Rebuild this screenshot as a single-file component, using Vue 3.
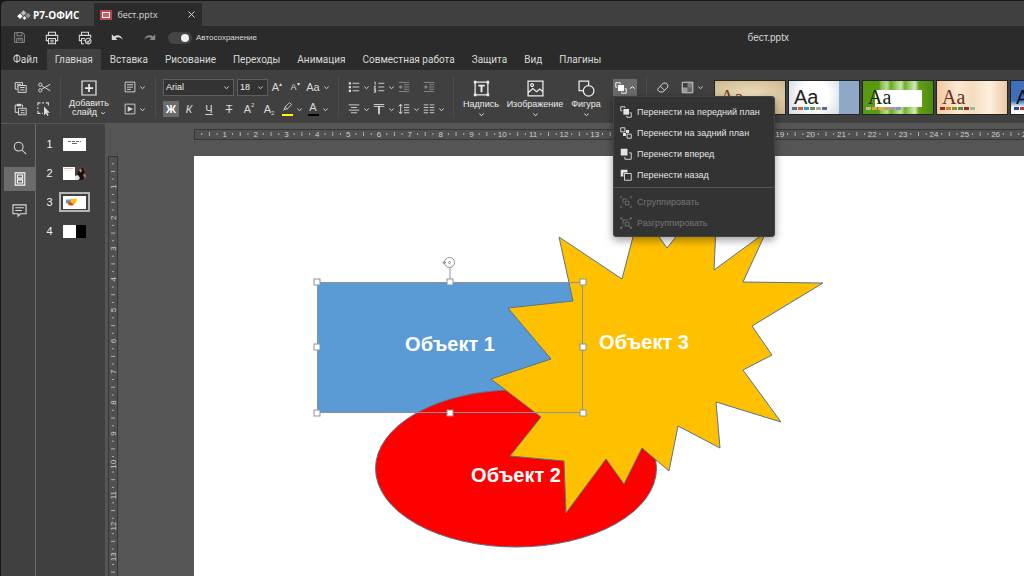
<script setup>
import { h, ref } from 'vue'

const S = (d) => ({ d })
const F = (d, opacity) => ({ d, fill: true, opacity })

const icons = {
  save: [S('M2 2h10l2 2v10H2zM5 2v4h6V2M4.500 14V9h7v5M6 11h4')],
  print: [S('M4 5V1.500h8V5M4 11H1.500V5h13v6H12M4 8.500h8v6H4zM6 10.500h4M6 12.500h4')],
  printPreview: [S('M4 5V1.500h8V5M4 11H1.500V5h13v3M7 14.500H4v-6h4M6 10.500h2M8.500 11.500a3.200 3.200 0 1 0 6.400 0a3.200 3.200 0 1 0 -6.400 0M10 11.500l1.500 1.500 2-3')],
  undo: [F('M1 4v7h7L5.500 8.700C8 7 12 7 14.500 11C13.500 5.500 8 3.500 3.700 6.700z')],
  redo: [F('M15 4v7H8l2.500-2.300C8 7 4 7 1.500 11C2.500 5.500 8 3.500 12.300 6.700z')],
  copy: [S('M4.500 10H1.500V2h9v3M3.500 4.500h5M3.500 7h1M5 5.500h10v8.500H5zM7.500 8h5.500M7.500 11h5.500')],
  cut: [S('M4.500 5.800L15 12M4.500 10.200L15 4M.8 4.500a2 2 0 1 0 4 0a2 2 0 1 0 -4 0M.8 11.500a2 2 0 1 0 4 0a2 2 0 1 0 -4 0')],
  paste: [S('M5 11.500H1.500v-9h9v3M5.500 6.500H15v8H5.500zM8 9h5M8 12h5'), F('M3.500 1h5v3h-5z')],
  select: [S('M1 4V1h3M6 1h2M10 1h3v3M1 6v2M1 10v3h3M6 13h1'), F('M8 5v10l2.300-2 1.500 3 1.500-.8-1.500-2.900h3z')],
  addSlide: [S('M1 1h14v14H1z'), F('M7.200 4h1.700v3.200H12v1.700H8.900V12H7.200V8.900H4V7.200h3.200z')],
  layout: [S('M1.500 1.500h13v13h-13zM4 5h8M4 8.200h8M4 11.200h5')],
  play: [S('M1.500 1.500h13v13h-13z'), F('M5 4.500v7L12 8z')],
  bullets: [S('M6 3h9M6 8h9M6 13h9'), F('M1 1.500h3v3H1zM1 6.500h3v3H1zM1 11.500h3v3H1z')],
  numbers: [S('M7 3h8M7 8h8M7 13h8M1.500 1.500H3V5M1 7h2.500L1.500 9.700H4M1 11.500h2.500v3.500H1M1.500 13h2')],
  outdent: [S('M1 2h14M8 5h7M8 8h7M8 11h7M1 14h14M1.500 8h5'), F('M1 8l3.500-3v6z')],
  indent: [S('M1 2h14M8 5h7M8 8h7M8 11h7M1 14h14M1 8h4'), F('M6.500 8L3 5v6z')],
  align: [S('M1 2.500h14M4 6h8M1 9.500h14M4 13h8')],
  valign: [S('M1 2h14M1 4.500h14'), F('M6.800 4h2.400v11H6.800z')],
  spacing: [S('M3.500 2v12M1 4.500L3.500 1.500 6 4.500M1 11.500l2.500 3 2.500-3M8 2.500h7M8 6h7M8 9.500h7M8 13h7')],
  columns: [S('M1 2.500h6M9 2.500h6M1 6h6M9 6h6M1 9.500h6M9 9.500h6M1 13h6M9 13h6')],
  textbox: [S('M2 2h12v12H2z'), F('M.8.800h2.400v2.400H.8zM12.800.800h2.400v2.400h-2.400zM.8 12.800h2.400v2.400H.8zM12.800 12.800h2.400v2.400h-2.400zM5 4.500h6v1.700H8.900v5.300H7.100V6.200H5z')],
  image: [S('M1 1h14v14H1zM1 12l4.500-4L9 11l3-2.500 3 2.500M3.500 4.800a1.300 1.300 0 1 0 2.600 0a1.300 1.300 0 1 0 -2.600 0')],
  shape: [S('M5 10H1V1h9v4M5 10.200a5 5 0 1 0 10 0a5 5 0 1 0 -10 0')],
  arrange: [F('M4 4h8v8H4z'), S('M3 7H1V1h6v2M13 9h2v6H9v-2')],
  front: [F('M4.500 4h7.500v7.500H4.500z'), S('M3 6.500H1V1h5.500v1.500M13 9h2v6H9v-2')],
  back: [S('M1 1h5.500v5.500H1zM9.500 9.500H15V15H9.500z'), F('M8 4h4v4H8zM4 8h4v4H4z')],
  forward: [F('M1 1h9v9H1z'), S('M12 6.500h3V15H6.500v-3')],
  backward: [F('M1 1h9v3.500H4.500V10H1z'), S('M6 6h9v9H6z')],
  group: [S('M1 3V1h2M13 1h2v2M1 13v2h2M15 13v2h-2M4 10V4h6M7 7h5v5H7z')],
  ungroup: [S('M1 3V1h2M13 1h2v2M1 13v2h2M15 13v2h-2M4 10V4h6M7 7h5v5H7zM1 1l3 3M15 1l-3 3M1 15l3-3M15 15l-3-3')],
  eraser: [S('M2 10l7-7.500h3.500L14.500 5v2.500L8.500 13.500H4.500L2 11zM5.500 6.500l5 5')],
  scheme: [S('M1.500 1.500h13v13h-13z'), F('M8 2h6v6H8z', 0.4), F('M2 8h6v6H2z', 0.6), F('M8 8h6v6H8z', 0.25)],
  search: [S('M1.500 6.500a5 5 0 1 0 10 0a5 5 0 1 0 -10 0M10 10l5 5')],
  slides: [S('M2.500 1h11v14h-11zM5 3.500h6v3.500H5zM5 9h6v3.500H5z')],
  comment: [S('M1 2h14v9.500H9L6.500 14v-2.500H1zM3.500 5h9M3.500 8h7')],
  marker: [S('M3 11l1.500-4L11 1l3 2.500L8 10zM4.500 7L8 10M2 12.500L3.500 11')],
  chevron: [S('M3 6l5 4.500 5-4.500')],
  chevronUp: [S('M3 10.500l5-4.500 5 4.500')]
}

const Icon = (props) =>
  h(
    'svg',
    { class: 'icon', viewBox: '0 0 16 16', width: props.size, height: props.size, 'aria-hidden': 'true' },
    icons[props.name].map((p) =>
      h('path', {
        d: p.d,
        fill: p.fill ? 'currentColor' : 'none',
        'fill-opacity': p.opacity,
        stroke: p.fill ? 'none' : 'currentColor',
        'stroke-width': props.size < 10 ? 2.2 : 1.2
      })
    )
  )
Icon.props = { name: String, size: { type: Number, default: 13 } }

const autosave = ref(true)
const font = ref('Arial')
const fontSize = ref('18')

const menuTabs = ['Файл', 'Главная', 'Вставка', 'Рисование', 'Переходы', 'Анимация', 'Совместная работа', 'Защита', 'Вид', 'Плагины']

const arrangeTop = [
  { icon: 'front', label: 'Перенести на передний план' },
  { icon: 'back', label: 'Перенести на задний план' },
  { icon: 'forward', label: 'Перенести вперед' },
  { icon: 'backward', label: 'Перенести назад' }
]
const arrangeBottom = [
  { icon: 'group', label: 'Сгруппировать' },
  { icon: 'ungroup', label: 'Разгруппировать' }
]

const inserts = [
  { icon: 'textbox', label: 'Надпись', cls: 'ins-a' },
  { icon: 'image', label: 'Изображение', cls: 'ins-b' },
  { icon: 'shape', label: 'Фигура', cls: 'ins-c' }
]

const themes = [
  { cls: 'sepia', colors: ['#9c5a2c', '#c98a3c', '#7d7d3a', '#b36b6b', '#8c6b4a', '#a0a060'] },
  { cls: 'winter', colors: ['#5f6a72', '#e0592b', '#2f9fc4', '#7c8a3c', '#a8a8a8', '#5b6b8c'] },
  { cls: 'green', colors: ['#a9c79a', '#e0a23a', '#d8b04a', '#c2a25a', '#9a9ac0', '#8a90c8'] },
  { cls: 'peach', colors: ['#8c2f1e', '#c9862c', '#8c8c3a', '#5e8a4a', '#9c2a2a', '#8cc49a'] },
  { cls: 'sky', colors: ['#2c4c8c', '#c0392b', '#3c6cb4', '#7aa23c', '#a0a0a0', '#606060'] }
]

// Ruler scale: pixels per centimetre; the slide is 34 by 19 cm.
const UNIT = 30.83
const range = (n) => Array.from({ length: n }, (_, i) => i)
const hTicks = range(34)
const vTicks = range(19)
const handles = [
  [123, 126], [256, 126], [389, 126],
  [123, 191], [389, 191],
  [123, 257], [256, 257], [389, 257]
]
const star =
  '365,81 428,123 446,54 473,92 524,28 520,114 572,76 549,126 629,127 558,170 578,199 549,214 587,266 522,246 526,292 484,270 475,315 448,292 430,328 412,303 372,357 370,305 316,300 347,261 297,223 357,203 314,152 379,145'
</script>

<template>
  <div class="window">
    <header class="titlebar">
      <div class="brand">
        <svg class="brand-mark" width="14" height="12" viewBox="0 0 14 12" aria-hidden="true">
          <path d="M3 4.500L5.800 7.300 3 10.100 .2 7.300z" fill="#fff" />
          <path d="M6.500 1.200L9.300 4 6.500 6.800 3.700 4z" fill="#bdbdbd" />
          <path d="M7.500 7L9.500 9 7.500 11 5.500 9z" fill="#f0f0f0" />
          <path d="M11 3.800L13.800 6.600 11 9.400 8.200 6.600z" fill="#8d8d8d" />
        </svg>
        <span>Р7-ОФИС</span>
      </div>
      <div class="doc-tab">
        <span class="doc-icon"></span>
        <span class="doc-name">бест.pptx</span>
        <button class="bare close" aria-label="Закрыть">
          <svg width="7" height="7" viewBox="0 0 7 7" aria-hidden="true"><path d="M.5.500l6 6M6.500.500l-6 6" stroke="currentColor" /></svg>
        </button>
      </div>
    </header>

    <div class="quickbar">
      <div class="quick-tools">
        <button class="bare dim" aria-label="Сохранить"><Icon name="save" /></button>
        <button class="bare" aria-label="Печать"><Icon name="print" :size="14" /></button>
        <button class="bare" aria-label="Быстрая печать"><Icon name="printPreview" :size="14" /></button>
        <button class="bare" aria-label="Отменить"><Icon name="undo" /></button>
        <button class="bare dim" aria-label="Повторить"><Icon name="redo" /></button>
        <label class="autosave">
          <input v-model="autosave" type="checkbox" class="switch" />
          <span>Автосохранение</span>
        </label>
      </div>
      <div class="doc-title">бест.pptx</div>
    </div>

    <nav class="menubar">
      <button v-for="t in menuTabs" :key="t" class="menu-tab" :class="{ active: t === 'Главная' }">{{ t }}</button>
    </nav>

    <div class="toolbar">
      <div class="group clip">
        <button class="bare" aria-label="Копировать"><Icon name="copy" /></button>
        <button class="bare" aria-label="Вырезать"><Icon name="cut" /></button>
        <button class="bare" aria-label="Вставить"><Icon name="paste" /></button>
        <button class="bare" aria-label="Выделить"><Icon name="select" :size="14" /></button>
      </div>

      <div class="group slide-group">
        <button class="big">
          <Icon name="addSlide" :size="16" />
          <span>Добавить</span>
          <span class="with-chevron">слайд <Icon name="chevron" :size="6" /></span>
        </button>
        <div class="stack">
          <button class="bare split" aria-label="Макет"><Icon name="layout" :size="12" /><Icon name="chevron" :size="7" /></button>
          <button class="bare split" aria-label="Показ"><Icon name="play" :size="12" /><Icon name="chevron" :size="7" /></button>
        </div>
      </div>

      <div class="group font-group">
        <div class="line">
          <label class="combo font-name">
            <select v-model="font" aria-label="Шрифт"><option>Arial</option></select>
            <Icon name="chevron" :size="7" />
          </label>
          <label class="combo font-size">
            <select v-model="fontSize" aria-label="Размер шрифта"><option>18</option></select>
            <Icon name="chevron" :size="7" />
          </label>
          <button class="bare glyph cell-18">A<sup>▴</sup></button>
          <button class="bare glyph small cell-18">A<sup>▾</sup></button>
          <button class="bare glyph split cell-28">Aa<Icon name="chevron" :size="7" /></button>
        </div>
        <div class="line format">
          <button class="bare glyph pressed"><b>Ж</b></button>
          <button class="bare glyph"><i>К</i></button>
          <button class="bare glyph"><u>Ч</u></button>
          <button class="bare glyph"><s>Т</s></button>
          <button class="bare glyph">A<sup>2</sup></button>
          <button class="bare glyph">A<sub>2</sub></button>
          <button class="bare glyph split" aria-label="Цвет выделения">
            <span class="swatch-icon yellow"><Icon name="marker" :size="11" /></span><Icon name="chevron" :size="7" />
          </button>
          <button class="bare glyph split">
            <span class="swatch-icon black">A</span><Icon name="chevron" :size="7" />
          </button>
        </div>
      </div>

      <div class="group para-group">
        <button class="bare split" aria-label="Маркеры"><Icon name="bullets" :size="12" /><Icon name="chevron" :size="7" /></button>
        <button class="bare split" aria-label="Нумерация"><Icon name="numbers" :size="12" /><Icon name="chevron" :size="7" /></button>
        <button class="bare split dim" aria-label="Уменьшить отступ"><Icon name="outdent" :size="12" /></button>
        <button class="bare split dim" aria-label="Увеличить отступ"><Icon name="indent" :size="12" /></button>
        <button class="bare split" aria-label="Выравнивание"><Icon name="align" :size="12" /><Icon name="chevron" :size="7" /></button>
        <button class="bare split" aria-label="По вертикали"><Icon name="valign" :size="12" /><Icon name="chevron" :size="7" /></button>
        <button class="bare split" aria-label="Интервал"><Icon name="spacing" :size="12" /><Icon name="chevron" :size="7" /></button>
        <button class="bare split" aria-label="Колонки"><Icon name="columns" :size="12" /><Icon name="chevron" :size="7" /></button>
      </div>

      <div class="group insert-group">
        <button v-for="i in inserts" :key="i.label" class="big" :class="i.cls">
          <Icon :name="i.icon" :size="17" />
          <span>{{ i.label }}</span>
          <Icon name="chevron" :size="7" />
        </button>
        <div class="arrange">
          <button class="bare arrange-btn" aria-label="Порядок" aria-expanded="true">
            <Icon name="arrange" :size="12" /><Icon name="chevronUp" :size="7" />
          </button>
          <div class="menu" role="menu">
            <button v-for="m in arrangeTop" :key="m.label" class="menu-item" role="menuitem">
              <Icon :name="m.icon" :size="12" /><span>{{ m.label }}</span>
            </button>
            <hr />
            <button v-for="m in arrangeBottom" :key="m.label" class="menu-item" role="menuitem" disabled>
              <Icon :name="m.icon" :size="12" /><span>{{ m.label }}</span>
            </button>
          </div>
        </div>
      </div>

      <div class="group style-group">
        <button class="bare" aria-label="Очистить стиль"><Icon name="eraser" :size="13" /></button>
        <button class="bare split" aria-label="Цветовая схема"><Icon name="scheme" :size="13" /><Icon name="chevron" :size="7" /></button>
      </div>

      <div class="gallery">
        <button v-for="t in themes" :key="t.cls" class="theme" :class="t.cls">
          <span class="aa">Aa</span>
          <span class="palette">
            <i v-for="(c, n) in t.colors" :key="n" :style="{ background: c }"></i>
          </span>
        </button>
      </div>
    </div>

    <main class="body">
      <aside class="rail">
        <button class="rail-btn" aria-label="Поиск"><Icon name="search" :size="14" /></button>
        <button class="rail-btn on" aria-label="Слайды"><Icon name="slides" :size="14" /></button>
        <button class="rail-btn" aria-label="Комментарии"><Icon name="comment" :size="15" /></button>
      </aside>

      <ol class="slides">
        <li v-for="n in 4" :key="n" :class="{ current: n === 3 }">
          <span class="num">{{ n }}</span>
          <button class="thumb" :aria-label="'Слайд ' + n">
            <svg viewBox="0 0 23 13" width="23" height="13" aria-hidden="true">
              <rect width="23" height="13" fill="#fff" />
              <g v-if="n === 1" stroke="#666" stroke-width="1">
                <path d="M5 3.500h13" stroke-dasharray="3 1" />
                <path d="M9 5.500h5" />
              </g>
              <g v-else-if="n === 2">
                <path d="M1 1.500h9" stroke="#e3b5b5" stroke-width="1" />
                <path d="M2 3.500h8" stroke="#eee" stroke-width="1" />
                <rect x="12" width="11" height="13" fill="#4d4040" />
                <path d="M14 8l2-6 4-1 2 5-2 7h-3z" fill="#14110f" />
                <path d="M16 2.500l2-1 1 3-2 1z" fill="#c98a78" />
                <path d="M12 9l3-1 2 3-2 2h-3z" fill="#e8e0dc" />
                <path d="M21 6l2 2v3l-3-2z" fill="#b06a50" />
              </g>
              <g v-else-if="n === 3">
                <rect x="3" y="3.500" width="5" height="4" fill="#5b9bd5" />
                <ellipse cx="8" cy="7.500" rx="3" ry="2" fill="#e8442a" />
                <path d="M8 2.500l2 .5 4-.5-1 4.500L10 8 7.500 6z" fill="#ffc000" />
              </g>
              <rect v-else x="13" width="10" height="13" fill="#000" />
            </svg>
          </button>
        </li>
      </ol>

      <section class="workspace">
        <svg class="vruler" aria-hidden="true">
          <rect class="ruler-frame" x="0.500" y="0.500" width="9" height="100%" />
          <g v-for="i in vTicks" :key="i">
            <path
              class="tick"
              :d="`M4 ${(i + 0.25) * UNIT}h2M3 ${(i + 0.5) * UNIT}h4M4 ${(i + 0.75) * UNIT}h2`"
            />
            <text v-if="i" class="ruler-num" :transform="`translate(8 ${i * UNIT}) rotate(-90)`">{{ i }}</text>
          </g>
        </svg>
        <svg class="hruler" aria-hidden="true">
          <rect class="ruler-frame" x="0.500" y="0.500" width="100%" height="10" />
          <g v-for="i in hTicks" :key="i">
            <path
              class="tick"
              :d="`M${(i + 0.25) * UNIT} 4v2M${(i + 0.5) * UNIT} 3v4M${(i + 0.75) * UNIT} 4v2`"
            />
            <text v-if="i" class="ruler-num" :x="i * UNIT" y="8">{{ i }}</text>
          </g>
        </svg>
        <svg class="slide">
          <rect x="123" y="126" width="266" height="131" fill="#5b9bd5" />
          <text class="caption" x="256" y="195">Объект 1</text>
          <ellipse cx="322" cy="312.500" rx="140.500" ry="78.500" fill="#ff0000" class="outline" />
          <text class="caption" x="322" y="326">Объект 2</text>
          <polygon :points="star" fill="#ffc000" class="outline" />
          <text class="caption" x="450" y="193">Объект 3</text>
          <g class="selection">
            <path d="M256 111v15" />
            <rect x="123.500" y="126.500" width="265" height="130" fill="none" />
            <circle cx="255.500" cy="106.500" r="5" fill="#fff" />
            <circle cx="255.500" cy="106.500" r="1" fill="none" />
            <path d="M249 106.500h3M249 106.500l1.500-1.500v3z" />
            <rect v-for="([x, y], n) in handles" :key="n" :x="x - 3" :y="y - 3" width="6" height="6" fill="#fff" />
          </g>
        </svg>
      </section>
    </main>
  </div>
</template>

<style>
body {
  background: #161616;
}
</style>

<style scoped>
.window {
  box-sizing: border-box;
  height: 100vh;
  padding: 1px 0 0 1px;
  display: flex;
  flex-direction: column;
  overflow: hidden;
  color: #d9d9d9;
  font: 9px/10px "Liberation Sans", Arial, sans-serif;
}
button,
select {
  font: inherit;
  color: inherit;
  margin: 0;
  padding: 0;
  border: 0;
  background: none;
}
.icon {
  display: block;
  flex: none;
}
.bare {
  display: flex;
  align-items: center;
  justify-content: center;
}
.dim {
  color: #8a8a8a;
}
.titlebar {
  flex: none;
  box-sizing: border-box;
  display: flex;
  height: 25px;
  padding-top: 2px;
  background: #404040;
  border-top-left-radius: 5px;
}
.brand {
  display: flex;
  align-items: center;
  gap: 2px;
  padding: 0 15px 0 16px;
  font: bold 10px/14px "Open Sans", sans-serif;
  color: #fff;
}
.doc-tab {
  display: flex;
  align-items: center;
  width: 95px;
  padding: 0 7px 0 6px;
  background: #2b2b2b;
  font: 9px/14px "Open Sans", sans-serif;
}
.doc-icon {
  width: 6px;
  height: 4px;
  border: 1px solid #fff;
  outline: 2px solid #b9484c;
  margin: 0 7px 0 2px;
  background: #c96064;
}
.doc-name {
  flex: 1;
}
.quickbar {
  flex: none;
  display: grid;
  grid-template-columns: 1fr 1fr;
  align-items: center;
  height: 23px;
  background: #2b2b2b;
}
.quick-tools {
  display: flex;
  align-items: center;
  gap: 19px;
  padding-left: 12px;
}
.autosave {
  display: flex;
  align-items: center;
  gap: 4px;
  margin-left: -7px;
  font-size: 8px;
}
.switch {
  appearance: none;
  display: grid;
  align-items: center;
  justify-content: end;
  box-sizing: border-box;
  width: 24px;
  height: 12px;
  margin: 0;
  padding: 0 3px;
  border-radius: 6px;
  background: #454545;
}
.switch::after {
  content: "";
  width: 8px;
  height: 8px;
  border-radius: 50%;
  background: #f2f2f2;
}
.doc-title {
  text-align: center;
  font: 10px/12px "Liberation Sans", Arial, sans-serif;
}
.menubar {
  flex: none;
  display: flex;
  gap: 1px;
  height: 21px;
  padding-left: 4px;
  background: #2b2b2b;
}
.menu-tab {
  padding: 0 8px;
  font: 10px/12px Roboto, "Liberation Sans", sans-serif;
  white-space: nowrap;
}
.menu-tab.active {
  background: #404040;
}
.toolbar {
  flex: none;
  box-sizing: border-box;
  display: flex;
  height: 54px;
  padding: 6px 0 5px;
  background: #404040;
  border-bottom: 1px solid #585858;
}
.group {
  flex: none;
  box-sizing: border-box;
  border-right: 1px solid #4d4d4d;
}
.clip {
  display: grid;
  grid-template-columns: 24px 24px;
  grid-template-rows: 22px 22px;
  padding: 0 4px 0 7px;
}
.slide-group {
  display: flex;
  padding: 0 9px 0 7px;
}
.big {
  display: flex;
  flex-direction: column;
  align-items: center;
  white-space: nowrap;
  color: #ececec;
  padding-top: 4px;
}
.big > span {
  line-height: 9px;
}
.big > .icon:first-child {
  margin-bottom: 3px;
}
.slide-group .big {
  width: 42px;
}
.with-chevron {
  display: flex;
  align-items: center;
  gap: 3px;
}
.stack {
  display: grid;
  grid-template-rows: 22px 22px;
  padding-left: 14px;
}
.split {
  gap: 3px;
  justify-content: flex-start;
}
.font-group {
  display: grid;
  grid-template-rows: 22px 22px;
  padding: 0 6px 0 7px;
}
.line {
  display: flex;
  align-items: center;
}
.combo {
  display: flex;
  align-items: center;
  box-sizing: border-box;
  height: 17px;
  padding: 0 3px 0 2px;
  border: 1px solid #5e5e5e;
  background: #333;
}
.combo select {
  flex: 1;
  min-width: 0;
  appearance: none;
  color: #f2f2f2;
}
.font-name {
  width: 71px;
  margin-right: 3px;
}
.font-size {
  width: 31px;
}
.glyph {
  font: 11px/14px "Liberation Sans", Arial, sans-serif;
}
.glyph sup,
.glyph sub {
  font-size: 6px;
  line-height: 8px;
}
.glyph sup {
  align-self: flex-start;
}
.glyph sub {
  align-self: flex-end;
}
.small {
  font-size: 9px;
}
.cell-18 {
  width: 18px;
}
.cell-28 {
  width: 28px;
  justify-content: center;
}
.format .glyph {
  width: 20px;
  height: 16px;
}
.format .pressed {
  width: 16px;
  background: #6b6b6b;
  color: #fff;
}
.format .split {
  width: 26px;
  justify-content: center;
}
.swatch-icon {
  display: flex;
  justify-content: center;
  width: 11px;
  height: 12px;
  line-height: 11px;
  border-bottom: 2px solid;
}
.yellow {
  border-color: #ffff00;
}
.black {
  border-color: #000;
}
.para-group {
  display: grid;
  grid-template-columns: repeat(4, 25px);
  grid-template-rows: 22px 22px;
  padding: 0 5px 0 9px;
}
.insert-group {
  display: flex;
  padding: 0 9px 0 6px;
}
.insert-group .big > span {
  margin-bottom: 2px;
}
.ins-a {
  width: 42px;
}
.ins-b {
  width: 66px;
}
.ins-c {
  width: 36px;
}
.arrange {
  position: relative;
  padding: 3px 0 0 9px;
}
.arrange-btn {
  width: 24px;
  height: 17px;
  gap: 2px;
  background: #6b6b6b;
  color: #fff;
}
.menu {
  position: absolute;
  z-index: 2;
  top: 20px;
  left: 9px;
  box-sizing: border-box;
  width: 162px;
  padding: 4px 0 3px;
  border: 1px solid #444;
  border-radius: 3px;
  background: #333;
  box-shadow: 0 3px 8px rgba(0, 0, 0, 0.4);
}
.menu-item {
  display: flex;
  align-items: center;
  gap: 5px;
  width: 100%;
  height: 21px;
  padding: 0 6px;
  white-space: nowrap;
  color: #e4e4e4;
}
.menu-item:disabled {
  color: #757575;
}
.menu hr {
  height: 1px;
  margin: 2px 0 3px;
  border: 0;
  background: #555;
}
.style-group {
  display: flex;
  align-items: flex-start;
  height: 22px;
  gap: 12px;
  padding: 5px 9px 0;
  border-right: 0;
}
.gallery {
  flex: 1;
  min-width: 0;
  display: flex;
  gap: 2px;
  padding: 4px 0 0 1px;
  overflow: hidden;
}
.theme {
  flex: none;
  box-sizing: border-box;
  display: flex;
  flex-direction: column;
  align-items: flex-start;
  width: 72px;
  height: 35px;
  padding: 6px 3px 0;
  border: 1px solid #242424;
}
.aa {
  font: 20px/20px "Liberation Sans", Arial, sans-serif;
  padding-left: 2px;
}
.palette {
  display: flex;
  gap: 1px;
}
.palette i {
  width: 5px;
  height: 3px;
}
.sepia {
  background: radial-gradient(#f3e6c8, #cdb68c);
  color: #7a3a14;
}
.winter {
  background: linear-gradient(90deg, transparent 50px, #8fa8c8 50px), radial-gradient(circle at 26px 14px, #fff 14px, #d3dce6 30px);
  color: #222;
}
.green {
  background: linear-gradient(#fff, #fff) 12px 9px / 47px 17px no-repeat,
    linear-gradient(90deg, #5a9a10 0 16px, #8cc048 18px, #b9d99a 24px, #6aa820 28px, #a8d078 34px, #c9e2ae 38px, #6fae28 42px, #9ccc60 46px, #d5e8c0 52px, #62a018 56px, #4d8c0a);
  color: #14240a;
}
.green .aa,
.sepia .aa,
.peach .aa {
  font-family: "Liberation Serif", serif;
}
.peach {
  background: linear-gradient(90deg, #f0c8a0, #fbe9d2 30%, #f5dcbc 50%, #fdf0de 75%, #ecc9a4);
  color: #6b2a1c;
}
.sky {
  background: linear-gradient(#3f6fb8 60%, #fff 80%);
  color: #111;
}
.body {
  flex: 1;
  min-height: 0;
  display: flex;
  background: #404040;
}
.rail {
  flex: none;
  display: flex;
  flex-direction: column;
  gap: 7px;
  padding: 12px 0 0 3px;
  border-right: 1px solid #6a6a6a;
}
.rail-btn {
  display: flex;
  align-items: center;
  justify-content: center;
  width: 31px;
  height: 24px;
}
.rail-btn.on {
  background: #6b6b6b;
  color: #fff;
}
.slides {
  flex: none;
  width: 69px;
  margin: 0;
  padding: 10px 0 0;
  list-style: none;
}
.slides li {
  display: flex;
  align-items: center;
  height: 20px;
  margin-bottom: 9px;
}
.num {
  width: 23px;
  padding-left: 4px;
  box-sizing: border-box;
  text-align: center;
  font-size: 11px;
  line-height: 12px;
  color: #f2f2f2;
}
.thumb {
  display: flex;
  align-items: center;
  justify-content: center;
  box-sizing: border-box;
  width: 31px;
  height: 20px;
}
.current .thumb {
  border: 2px solid #b5b5b5;
}
.workspace {
  flex: 1;
  min-width: 0;
  display: grid;
  grid-template-columns: 89px 1fr;
  grid-template-rows: 32px 1fr;
  background: #555;
}
.hruler {
  grid-area: 1 / 2;
  width: 100%;
  height: 11px;
  margin-top: 5px;
}
.vruler {
  grid-area: 2 / 1;
  width: 11px;
  height: 100%;
  margin-left: 3px;
}
.slide {
  grid-area: 2 / 2;
  width: 100%;
  height: 100%;
  background: #fff;
}
.ruler-frame {
  fill: #505050;
  stroke: #363636;
}
.tick {
  stroke: #b0b0b0;
  stroke-width: 1;
}
.ruler-num {
  fill: #cfcfcf;
  font-size: 8px;
  text-anchor: middle;
}
.outline {
  stroke: #56748c;
  stroke-width: 1;
}
.caption {
  fill: #fff;
  font: bold 20px "Liberation Sans", Arial, sans-serif;
  text-anchor: middle;
}
.selection {
  stroke: #8a939b;
  stroke-width: 1;
}
</style>
